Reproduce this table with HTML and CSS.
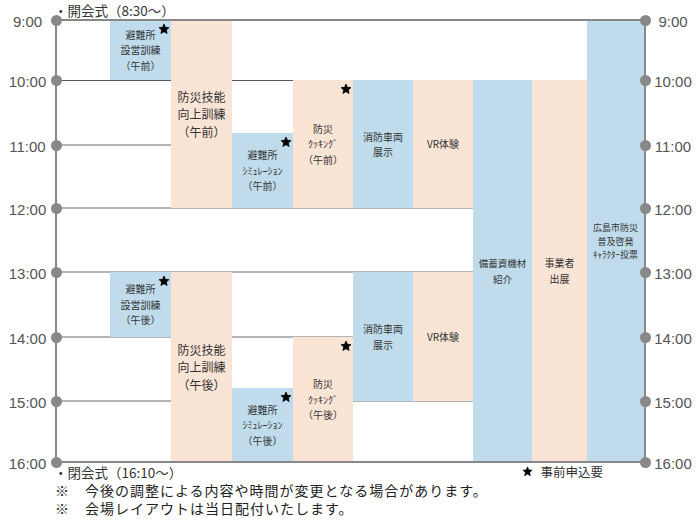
FILE: index.html
```html
<!DOCTYPE html>
<html lang="ja">
<head>
<meta charset="utf-8">
<title>タイムスケジュール</title>
<link rel="stylesheet" href="styles.css">
</head>
<body>
<div class="page">
  <div class="event-top">・開会式（8:30〜）</div>

  <div class="chart">
    <div class="axis axis-left"></div>
    <div class="axis axis-right"></div>

    <div class="hline frame r9"></div>
    <div class="hline dark r10"></div>
    <div class="hline r11"></div>
    <div class="hline r12"></div>
    <div class="hline r13"></div>
    <div class="hline r14"></div>
    <div class="hline r15"></div>
    <div class="hline frame r16"></div>

    <span class="dot dot-l r9"></span><span class="dot dot-r r9"></span>
    <span class="dot dot-l r10"></span><span class="dot dot-r r10"></span>
    <span class="dot dot-l r11"></span><span class="dot dot-r r11"></span>
    <span class="dot dot-l r12"></span><span class="dot dot-r r12"></span>
    <span class="dot dot-l r13"></span><span class="dot dot-r r13"></span>
    <span class="dot dot-l r14"></span><span class="dot dot-r r14"></span>
    <span class="dot dot-l r15"></span><span class="dot dot-r r15"></span>
    <span class="dot dot-l r16"></span><span class="dot dot-r r16"></span>

    <span class="time time-l r9">9:00</span><span class="time time-r r9">9:00</span>
    <span class="time time-l r10">10:00</span><span class="time time-r r10">10:00</span>
    <span class="time time-l r11">11:00</span><span class="time time-r r11">11:00</span>
    <span class="time time-l r12">12:00</span><span class="time time-r r12">12:00</span>
    <span class="time time-l r13">13:00</span><span class="time time-r r13">13:00</span>
    <span class="time time-l r14">14:00</span><span class="time time-r r14">14:00</span>
    <span class="time time-l r15">15:00</span><span class="time time-r r15">15:00</span>
    <span class="time time-l r16">16:00</span><span class="time time-r r16">16:00</span>

    <!-- morning -->
    <div class="blk blue shelter-am">
      <span class="ln">避難所</span><span class="ln">設営訓練</span><span class="ln">（午前）</span>
      <svg class="star" viewBox="0 0 24 24"><path d="M12 2l2.9 6.6 7.1.6-5.4 4.8 1.6 7L12 17.3 5.8 21l1.6-7L2 9.2l7.1-.6z"/></svg>
    </div>
    <div class="blk peach skill skill-am">
      <span class="ln">防災技能</span><span class="ln">向上訓練</span><span class="ln">（午前）</span>
    </div>
    <div class="blk blue sim-am">
      <span class="ln">避難所</span><span class="ln kana">ｼﾐｭﾚｰｼｮﾝ</span><span class="ln">（午前）</span>
      <svg class="star" viewBox="0 0 24 24"><path d="M12 2l2.9 6.6 7.1.6-5.4 4.8 1.6 7L12 17.3 5.8 21l1.6-7L2 9.2l7.1-.6z"/></svg>
    </div>
    <div class="blk peach cook-am">
      <span class="ln">防災</span><span class="ln kana">ｸｯｷﾝｸﾞ</span><span class="ln">（午前）</span>
      <svg class="star" viewBox="0 0 24 24"><path d="M12 2l2.9 6.6 7.1.6-5.4 4.8 1.6 7L12 17.3 5.8 21l1.6-7L2 9.2l7.1-.6z"/></svg>
    </div>
    <div class="blk blue fire-am">
      <span class="ln">消防車両</span><span class="ln">展示</span>
    </div>
    <div class="blk peach vr-am">
      <span class="ln">VR体験</span>
    </div>
    <div class="blk blue stock">
      <span class="ln">備蓄資機材</span><span class="ln">紹介</span>
    </div>
    <div class="blk peach vendor">
      <span class="ln">事業者</span><span class="ln">出展</span>
    </div>
    <div class="blk blue chara">
      <span class="ln">広島市防災</span><span class="ln">普及啓発</span><span class="ln"><span class="kana">ｷｬﾗｸﾀｰ</span>投票</span>
    </div>

    <!-- afternoon -->
    <div class="blk blue shelter-pm">
      <span class="ln">避難所</span><span class="ln">設営訓練</span><span class="ln">（午後）</span>
      <svg class="star" viewBox="0 0 24 24"><path d="M12 2l2.9 6.6 7.1.6-5.4 4.8 1.6 7L12 17.3 5.8 21l1.6-7L2 9.2l7.1-.6z"/></svg>
    </div>
    <div class="blk peach skill skill-pm">
      <span class="ln">防災技能</span><span class="ln">向上訓練</span><span class="ln">（午後）</span>
    </div>
    <div class="blk blue sim-pm">
      <span class="ln">避難所</span><span class="ln kana">ｼﾐｭﾚｰｼｮﾝ</span><span class="ln">（午後）</span>
      <svg class="star" viewBox="0 0 24 24"><path d="M12 2l2.9 6.6 7.1.6-5.4 4.8 1.6 7L12 17.3 5.8 21l1.6-7L2 9.2l7.1-.6z"/></svg>
    </div>
    <div class="blk peach cook-pm">
      <span class="ln">防災</span><span class="ln kana">ｸｯｷﾝｸﾞ</span><span class="ln">（午後）</span>
      <svg class="star" viewBox="0 0 24 24"><path d="M12 2l2.9 6.6 7.1.6-5.4 4.8 1.6 7L12 17.3 5.8 21l1.6-7L2 9.2l7.1-.6z"/></svg>
    </div>
    <div class="blk blue fire-pm">
      <span class="ln">消防車両</span><span class="ln">展示</span>
    </div>
    <div class="blk peach vr-pm">
      <span class="ln">VR体験</span>
    </div>
  </div>

  <div class="below">
    <div class="event-bottom">・閉会式（16:10〜）</div>
    <div class="legend"><svg class="legend-star" viewBox="0 0 24 24"><path d="M12 2l2.9 6.6 7.1.6-5.4 4.8 1.6 7L12 17.3 5.8 21l1.6-7L2 9.2l7.1-.6z"/></svg>事前申込要</div>
  </div>

  <div class="notes">
    <p>※　今後の調整による内容や時間が変更となる場合があります。</p>
    <p>※　会場レイアウトは当日配付いたします。</p>
  </div>
</div>
</body>
</html>
```

FILE: styles.css
```css
* { box-sizing: border-box; }

html, body {
  margin: 0;
  padding: 0;
  background: #fff;
}

body {
  font-family: "Noto Sans CJK JP", "Noto Sans", sans-serif;
  color: #333;
}

.page {
  width: 700px;
  height: 523px;
  overflow: hidden;
}

.event-top {
  height: 20px;
  padding-left: 54px;
  font-size: 13.5px;
  line-height: 20px;
  color: #333;
}

.chart {
  display: grid;
  grid-template-columns:
    [L] 55px [aL] 2px [c0] 53px [c1] 61px [c2] 61px [c3] 61px
    [c4] 60px [c5] 60px [c6] 60px [c7] 59px [c8] 55px [c9] 57px
    [aR] 2px [R] 54px;
  grid-template-rows:
    [t900] 60px [t1000] 53px [t1050] 12px [t1100] 63px [t1200] 64px
    [t1300] 65px [t1400] 51px [t1450] 13px [t1500] 61px [t1600] 0px;
}

/* row anchors */
.r9  { grid-row: t900; }
.r10 { grid-row: t1000; }
.r11 { grid-row: t1100; }
.r12 { grid-row: t1200; }
.r13 { grid-row: t1300; }
.r14 { grid-row: t1400; }
.r15 { grid-row: t1500; }
.r16 { grid-row: t1600; }

/* axes */
.axis {
  grid-row: t900 / t1600;
  background: #888;
  z-index: 2;
}
.axis-left { grid-column: aL; }
.axis-right { grid-column: aR; }

/* hour lines */
.hline {
  grid-column: c0 / aR;
  align-self: start;
  height: 2px;
  margin-top: -1px;
  background: #b5b5b5;
  z-index: 0;
}
.hline.dark {
  height: 1px;
  margin-top: 0;
  background: #555;
}
.hline.frame {
  background: #888;
  z-index: 2;
}

/* dots */
.dot {
  align-self: start;
  justify-self: start;
  width: 11px;
  height: 11px;
  margin-top: -5.5px;
  margin-left: -4.5px;
  border-radius: 50%;
  background: #888;
  z-index: 3;
}
.dot-l { grid-column: aL; }
.dot-r { grid-column: aR; }

/* time labels */
.time {
  align-self: start;
  margin-top: -7px;
  font-family: "Liberation Sans", Arial, sans-serif;
  font-size: 15px;
  line-height: 17px;
  color: #555;
  text-align: center;
}
.time-l { grid-column: L; }
.time-r { grid-column: R; }

/* blocks */
.blk {
  position: relative;
  z-index: 1;
  display: flex;
  flex-direction: column;
  justify-content: center;
  align-items: center;
  text-align: center;
  font-size: 10px;
  color: #333;
  white-space: nowrap;
}
.blk .ln {
  display: block;
  height: 15.5px;
  line-height: 15.5px;
}
.blue { background: #c0dcec; }
.peach { background: #f9e4d5; }

.kana { font-size: 10px; }

.skill { font-size: 12px; }
.skill .ln { height: 17.5px; line-height: 17.5px; }

.shelter-am { grid-column: c1; grid-row: t900 / t1000; }
.skill-am   { grid-column: c2; grid-row: t900 / t1200; }
.sim-am     { grid-column: c3; grid-row: t1050 / t1200; }
.cook-am    { grid-column: c4; grid-row: t1000 / t1200; }
.fire-am    { grid-column: c5; grid-row: t1000 / t1200; }
.vr-am      { grid-column: c6; grid-row: t1000 / t1200; }
.stock      { grid-column: c7; grid-row: t1000 / t1600; font-size: 9.5px; }
.stock .ln, .vendor .ln { height: 16px; line-height: 16px; }
.vendor     { grid-column: c8; grid-row: t1000 / t1600; }
.chara      { grid-column: c9; grid-row: t900 / t1600; font-size: 9px; padding-top: 1px; }
.chara .ln  { height: 13.5px; line-height: 13.5px; }
.chara .kana { font-size: 9px; }

.shelter-pm { grid-column: c1; grid-row: t1300 / t1400; }
.skill-pm   { grid-column: c2; grid-row: t1300 / t1600; }
.sim-pm     { grid-column: c3; grid-row: t1450 / t1600; }
.cook-pm    { grid-column: c4; grid-row: t1400 / t1600; }
.fire-pm    { grid-column: c5; grid-row: t1300 / t1500; }
.vr-pm      { grid-column: c6; grid-row: t1300 / t1500; }

.star {
  position: absolute;
  top: 3px;
  right: 1px;
  width: 12px;
  height: 12px;
  fill: #000;
  stroke: #000;
  stroke-width: 1.5;
  stroke-linejoin: round;
}

/* below chart */
.below {
  display: flex;
  justify-content: space-between;
  align-items: center;
  height: 19px;
  padding: 0 97px 0 54px;
  font-size: 13.5px;
  color: #333;
}
.legend {
  display: flex;
  align-items: center;
  gap: 7px;
  font-size: 12.5px;
}
.legend-star {
  width: 11px;
  height: 11px;
  fill: #000;
  stroke: #000;
  stroke-width: 1.5;
  stroke-linejoin: round;
}

.notes {
  padding-left: 55px;
  color: #222;
  font-size: 14px;
  letter-spacing: 1px;
}
.notes p {
  margin: 0;
  height: 18px;
  line-height: 18px;
}
```
